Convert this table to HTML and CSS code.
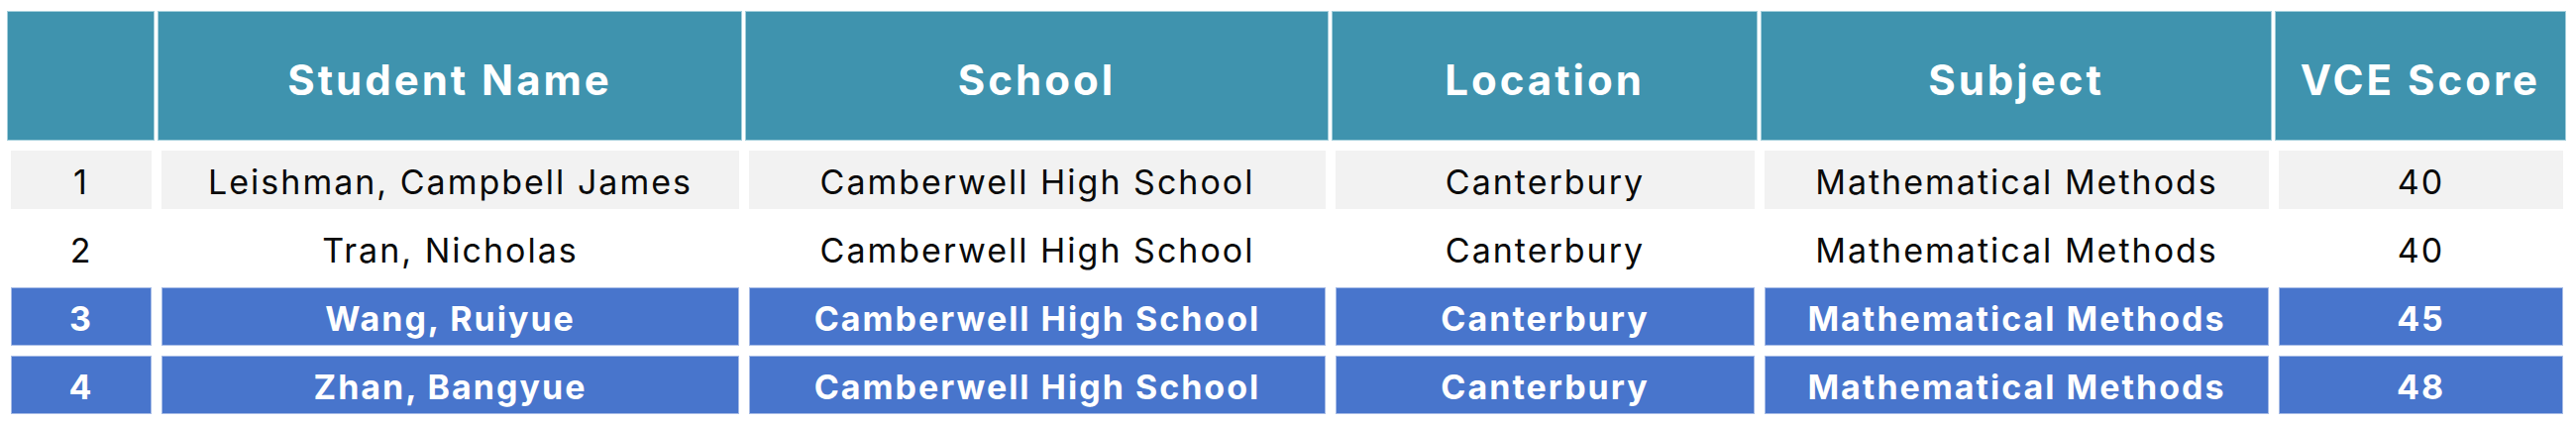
FILE: index.html
```html
<!DOCTYPE html>
<html lang="en">
<head>
<meta charset="utf-8">
<title>VCE Scores</title>
<link rel="stylesheet" href="styles.css">
</head>
<body>
<div class="table">
  <div class="row head">
    <div class="cell"></div>
    <div class="cell">Student Name</div>
    <div class="cell">School</div>
    <div class="cell">Location</div>
    <div class="cell">Subject</div>
    <div class="cell">VCE Score</div>
  </div>
  <div class="row body grey">
    <div class="cell">1</div>
    <div class="cell">Leishman, Campbell James</div>
    <div class="cell">Camberwell High School</div>
    <div class="cell">Canterbury</div>
    <div class="cell">Mathematical Methods</div>
    <div class="cell">40</div>
  </div>
  <div class="row body plain">
    <div class="cell">2</div>
    <div class="cell">Tran, Nicholas</div>
    <div class="cell">Camberwell High School</div>
    <div class="cell">Canterbury</div>
    <div class="cell">Mathematical Methods</div>
    <div class="cell">40</div>
  </div>
  <div class="row body hl">
    <div class="cell">3</div>
    <div class="cell">Wang, Ruiyue</div>
    <div class="cell">Camberwell High School</div>
    <div class="cell">Canterbury</div>
    <div class="cell">Mathematical Methods</div>
    <div class="cell">45</div>
  </div>
  <div class="row body hl">
    <div class="cell">4</div>
    <div class="cell">Zhan, Bangyue</div>
    <div class="cell">Camberwell High School</div>
    <div class="cell">Canterbury</div>
    <div class="cell">Mathematical Methods</div>
    <div class="cell">48</div>
  </div>
</div>
</body>
</html>
```

FILE: styles.css
```css
html, body {
  margin: 0;
  padding: 0;
  background: #ffffff;
}

body {
  font-family: Inter, "Noto Sans", "Liberation Sans", sans-serif;
  color: #0a0a0a;
}

.table {
  display: flex;
  flex-direction: column;
  gap: 10px;
  padding: 11px 0 0 7px;
}

.row {
  display: grid;
  grid-template-columns: 149px 590px 589px 430px 516px 294px;
  column-gap: 3px;
}

.cell {
  display: flex;
  align-items: center;
  justify-content: center;
  white-space: nowrap;
  box-sizing: border-box;
}

.head .cell {
  height: 131px;
  background: #3f93ae;
  border: 1px solid #a4cfdc;
  color: #ffffff;
  font-weight: 700;
  font-size: 42px;
  letter-spacing: 3px;
  padding-top: 8px;
}

.body .cell {
  height: 59px;
  margin: 0 3px 0 4px;
  font-size: 34px;
  letter-spacing: 2px;
  padding-top: 3px;
}

.grey .cell {
  background: #f2f2f2;
}

.hl .cell {
  background: #4875cc;
  border: 1px solid #a6bbe6;
  color: #ffffff;
  font-weight: 700;
}
```
